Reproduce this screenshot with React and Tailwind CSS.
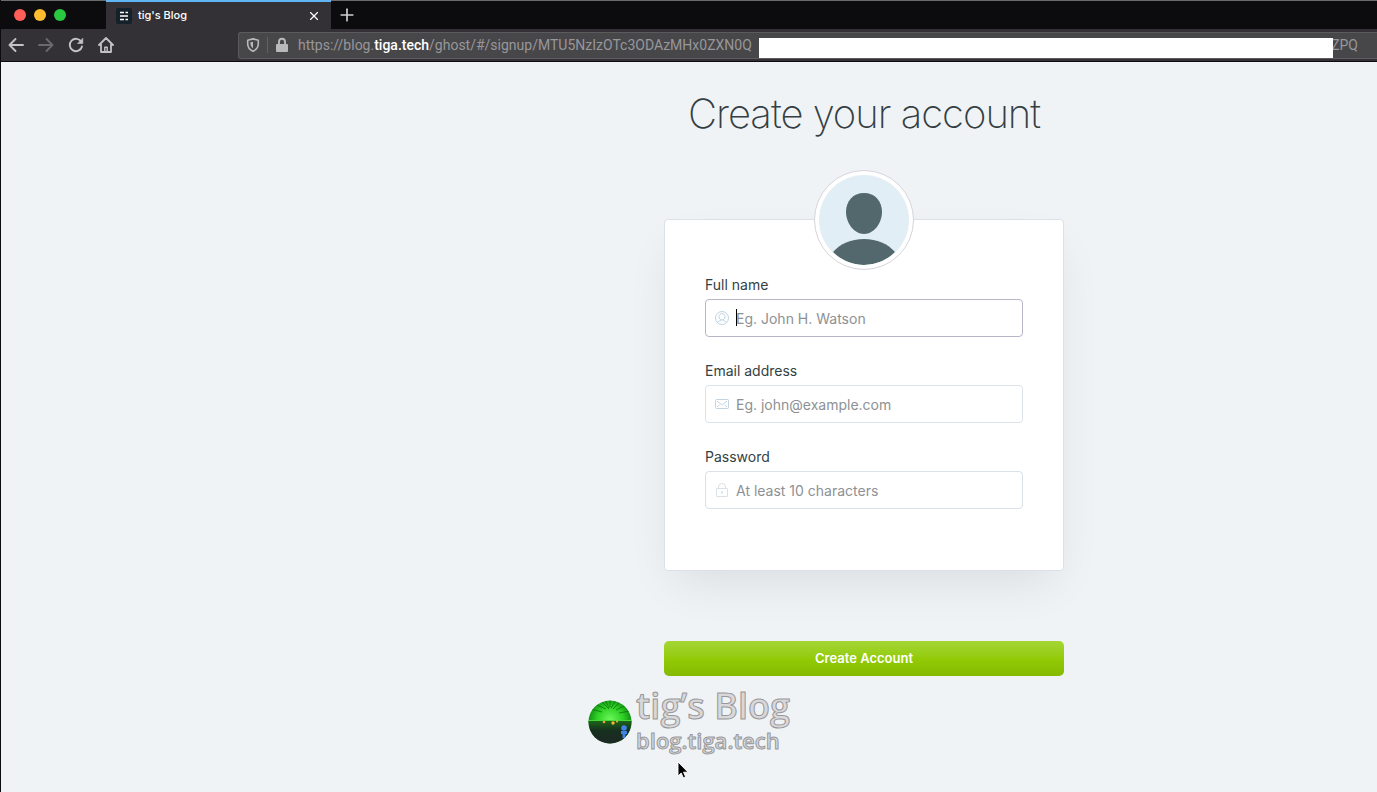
import { LuPlus, LuX } from 'react-icons/lu';

const fields = [
  { id: 'name', label: 'Full name', type: 'text', placeholder: 'Eg. John H. Watson', icon: UserIcon, active: true },
  { id: 'email', label: 'Email address', type: 'email', placeholder: 'Eg. john@example.com', icon: MailIcon },
  { id: 'password', label: 'Password', type: 'password', placeholder: 'At least 10 characters', icon: LockIcon },
];

function UserIcon() {
  return (
    <svg viewBox="0 0 14 14" className="w-[14px] h-[14px]" fill="none" stroke="#b9cfe0" strokeWidth="0.9">
      <circle cx="7" cy="7" r="6.5" />
      <path d="M7 2.7c1.9 0 3 1.3 3 3.1S8.700 9 7 9 4 7.600 4 5.800s1.100-3.100 3-3.100z" />
      <path d="M2.500 11.600c.5-1.300 2-1.500 3.200-2v-.9M11.500 11.600c-.5-1.300-2-1.500-3.200-2v-.9" />
    </svg>
  );
}

function MailIcon() {
  return (
    <svg viewBox="0 0 14 14" className="w-[14px] h-[14px]" fill="none" stroke="#b9cfe0" strokeWidth="0.9">
      <rect x="0.5" y="2.5" width="13" height="9" rx="1" />
      <path d="M2 4l3.900 3.100c.7.5 1.500.5 2.200 0L12 4M2 10l2.500-2M12 10L9.500 8" />
    </svg>
  );
}

function LockIcon() {
  return (
    <svg viewBox="0 0 14 14" className="w-[14px] h-[14px]" fill="none" stroke="#d5dde4" strokeWidth="0.9">
      <rect x="1.500" y="5.500" width="11" height="8" rx="0.5" />
      <path d="M3.500 5.500V4a3.500 3.500 0 0 1 7 0v1.500M7 9.500v1.500" />
      <circle cx="7" cy="9" r="0.6" />
    </svg>
  );
}

function TabBar() {
  return (
    <div className="flex h-[29px] bg-[#0c0c0e] border-t border-[#6b6b6b]">
      <div className="flex items-center gap-2 w-[105px] pl-[13px]">
        <span className="w-3 h-3 rounded-full bg-[#ff5f57]" />
        <span className="w-3 h-3 rounded-full bg-[#febc2e]" />
        <span className="w-3 h-3 rounded-full bg-[#28c840]" />
      </div>
      <div className="-mt-px flex items-center w-[225px] pl-[10px] pr-[10px] bg-[#333135] border-t-2 border-[#61b5f5]">
        <svg viewBox="0 0 16 16" className="w-4 h-4">
          <rect width="16" height="16" rx="2" fill="#15212a" />
          <path d="M4 4.500h4M9.500 4.500H12M4 8h8M4 11.500h4M9.500 11.500H12" stroke="#fff" strokeWidth="1.500" />
        </svg>
        <span className="ml-[6px] flex-1 text-[11px] font-medium text-white">tig's Blog</span>
        <button aria-label="Close tab" className="text-white">
          <LuX className="w-[14px] h-[14px]" />
        </button>
      </div>
      <button aria-label="New tab" className="ml-[6px] text-[#d0d0d1]">
        <LuPlus className="w-5 h-5" strokeWidth={2} />
      </button>
    </div>
  );
}

function NavBar() {
  return (
    <div className="flex items-center h-[33px] bg-[#333135] border-b border-[#0c0c0d]">
      <div className="flex items-center gap-[14px] w-[237px] pl-[7px] text-[#c3c2c4]">
        <button aria-label="Back">
          <svg viewBox="0 0 16 16" className="w-4 h-4" fill="none" stroke="currentColor" strokeWidth="1.900" strokeLinecap="round" strokeLinejoin="round">
            <path d="M15 8H1.500M7.500 2L1.500 8l6 6" />
          </svg>
        </button>
        <button aria-label="Forward" className="text-[#6b696d]">
          <svg viewBox="0 0 16 16" className="w-4 h-4" fill="none" stroke="currentColor" strokeWidth="1.900" strokeLinecap="round" strokeLinejoin="round">
            <path d="M1 8h13.500M8.500 2l6 6-6 6" />
          </svg>
        </button>
        <button aria-label="Reload">
          <svg viewBox="0 0 16 16" className="w-4 h-4" fill="none" stroke="currentColor" strokeWidth="1.900" strokeLinecap="round" strokeLinejoin="round">
            <path d="M13.300 4.800A6.200 6.200 0 1 0 14 9.500" />
            <path d="M14.800 1.500v5h-5z" fill="currentColor" strokeWidth="0.6" />
          </svg>
        </button>
        <button aria-label="Home">
          <svg viewBox="0 0 16 16" className="w-4 h-4" fill="none" stroke="currentColor" strokeWidth="1.800" strokeLinecap="round" strokeLinejoin="round">
            <path d="M1 8l7-7 7 7M3 7.500V15h10V7.500" />
            <path d="M6.800 14.500V10.300h2.400v4.200" strokeWidth="1.400" />
          </svg>
        </button>
      </div>
      <div className="flex flex-1 items-center h-[27px] min-w-0 pl-[7px] pr-[19px] bg-[#474649] border border-r-0 border-[#5b5a5d] rounded-l-[3px] font-[Roboto,sans-serif] text-sm text-[#98979a] whitespace-nowrap">
        <svg viewBox="0 0 14 14" className="w-[14px] h-[14px]" fill="none" stroke="#b9b8ba" strokeWidth="1.600" strokeLinejoin="round">
          <path d="M7 .9l5.300 1.300v3.600c0 3.600-2 6-5.300 7.400C3.700 11.800 1.700 9.400 1.700 5.800V2.200z" />
          <path d="M7 3.700v6.500C5.300 9 4.500 7.700 4.500 5.800V4.300z" fill="#b9b8ba" stroke="none" />
        </svg>
        <span className="ml-[7px] w-px h-4 bg-[#626164]" />
        <svg viewBox="0 0 14 16" className="ml-[7px] w-[14px] h-4" fill="#b9b8ba">
          <rect x="1" y="7" width="12" height="8" rx="1" />
          <path d="M4 7.500V4.700a3 3 0 0 1 6 0v2.800" fill="none" stroke="#b9b8ba" strokeWidth="1.900" />
        </svg>
        <span className="ml-[9px]">
          https://blog.<span className="font-medium text-white">tiga.tech</span>/ghost/#/signup/MTU5NzIzOTc3ODAzMHx0ZXN0Q
        </span>
        <span className="relative self-end flex-1 h-5 ml-[7px] bg-white" />
        <span className="-ml-[2px]">ZPQ</span>
      </div>
    </div>
  );
}

function Avatar() {
  return (
    <div className="w-[100px] h-[100px] p-1 rounded-full bg-white border border-[#d5d5da]">
      <svg viewBox="0 0 90 90" className="w-full h-full rounded-full bg-[#e2eef6]" fill="#53686d">
        <path d="M45 18c11 0 18 8 18 19 0 11-8 22-18 22s-18-11-18-22c0-11 7-19 18-19z" />
        <path d="M14 77c7-8 18-13 31-13s24 5 31 13c-8 8-19 13-31 13s-23-5-31-13z" />
      </svg>
    </div>
  );
}

function Field({ id, label, type, placeholder, icon: Icon, active }) {
  return (
    <div>
      <label htmlFor={id} className="block text-sm leading-5 text-[#343f44]">{label}</label>
      <div className={`relative flex items-center mt-1 h-[38px] pl-[9px] rounded border bg-white ${active ? 'border-[#b5b6c8]' : 'border-[#dae1e8]'}`}>
        <Icon />
        <input
          id={id}
          type={type}
          placeholder={placeholder}
          className="flex-1 min-w-0 h-full ml-[7px] text-sm text-[#343f44] placeholder:text-[#8e9194] outline-none"
        />
        {active && <span className="absolute left-[30px] top-[9px] w-px h-[17px] bg-black" />}
      </div>
    </div>
  );
}

function Watermark() {
  return (
    <div className="absolute inset-x-0 bottom-9 flex items-center justify-center gap-1 pointer-events-none">
      <svg viewBox="0 0 44 44" className="w-11 h-11">
        <defs>
          <radialGradient id="aurora" cx="0.5" cy="0.45" r="0.55">
            <stop offset="0" stopColor="#6cf85a" />
            <stop offset="0.55" stopColor="#2ed024" />
            <stop offset="1" stopColor="#0b7a10" />
          </radialGradient>
          <linearGradient id="ground" x1="0" y1="0" x2="0" y2="1">
            <stop offset="0" stopColor="#1c6418" />
            <stop offset="0.4" stopColor="#16301f" />
            <stop offset="1" stopColor="#1d2724" />
          </linearGradient>
          <clipPath id="disc">
            <circle cx="22" cy="22" r="21.500" />
          </clipPath>
        </defs>
        <g clipPath="url(#disc)">
          <rect width="44" height="44" fill="url(#aurora)" />
          <path d="M21 9L12 0M21 8L17 0M22 7V0M23 8L28 0M25 9L33 1M18 9L6 4M28 10L38 5M14 12L3 9M31 13L42 11" stroke="#0b6a10" strokeWidth="0.7" />
          <rect y="21" width="44" height="23" fill="url(#ground)" />
          <path d="M0 20.500h44" stroke="#46d83a" strokeWidth="1" />
          <circle cx="16" cy="22" r="1.300" fill="#f0a030" />
          <circle cx="25" cy="23" r="1.700" fill="#ffae30" />
          <circle cx="29" cy="21.500" r="1" fill="#e8c040" />
          <circle cx="36" cy="28" r="2.800" fill="#3f83e6" />
          <path d="M33 31h6v3h-1.500v4h-3v-4H33z" fill="#3f83e6" />
        </g>
      </svg>
      <div className="font-['Open_Sans',sans-serif] font-semibold text-[#d8d8da] [-webkit-text-stroke:1px_#98989b]">
        <div className="text-4xl leading-9">tig’s Blog</div>
        <div className="text-[22px] leading-8">blog.tiga.tech</div>
      </div>
    </div>
  );
}

export default function App() {
  return (
    <div className="relative flex flex-col min-h-screen border-l border-[#0c0c0d] bg-[#f0f3f6] overflow-hidden font-['Inter',sans-serif]">
      <header>
        <TabBar />
        <NavBar />
      </header>

      <main className="flex flex-1 justify-center pl-[350px]">
        <form className="flex flex-col items-center w-[400px] pt-[26px]">
          <h1 className="text-[40px] leading-[52px] font-extralight tracking-tight whitespace-nowrap text-[#343f44]">
            Create your account
          </h1>
          <section className="flex flex-col items-center w-full mt-[79px] pb-[61px] px-10 bg-white border border-[#dae1e8] rounded shadow-[0_20px_45px_-10px_rgba(0,0,0,0.09)]">
            <div className="-mt-[50px]">
              <Avatar />
            </div>
            <div className="flex flex-col gap-6 w-full mt-[5px]">
              {fields.map((field) => (
                <Field key={field.id} {...field} />
              ))}
            </div>
          </section>
          <button
            type="button"
            className="w-full h-[35px] mt-[70px] rounded-[5px] bg-linear-to-b from-[#a4d632] via-[#93cb06] to-[#84b900] text-[13px] font-semibold text-white"
          >
            Create Account
          </button>
        </form>
      </main>

      <Watermark />

      <svg viewBox="0 0 12 18" className="absolute left-[676px] bottom-[13px] w-3 h-[18px]">
        <path d="M1 1v14l3.200-3 2.100 4.800 2.300-1-2.100-4.600H11z" fill="#000" stroke="#fff" strokeWidth="0.9" />
      </svg>
    </div>
  );
}
